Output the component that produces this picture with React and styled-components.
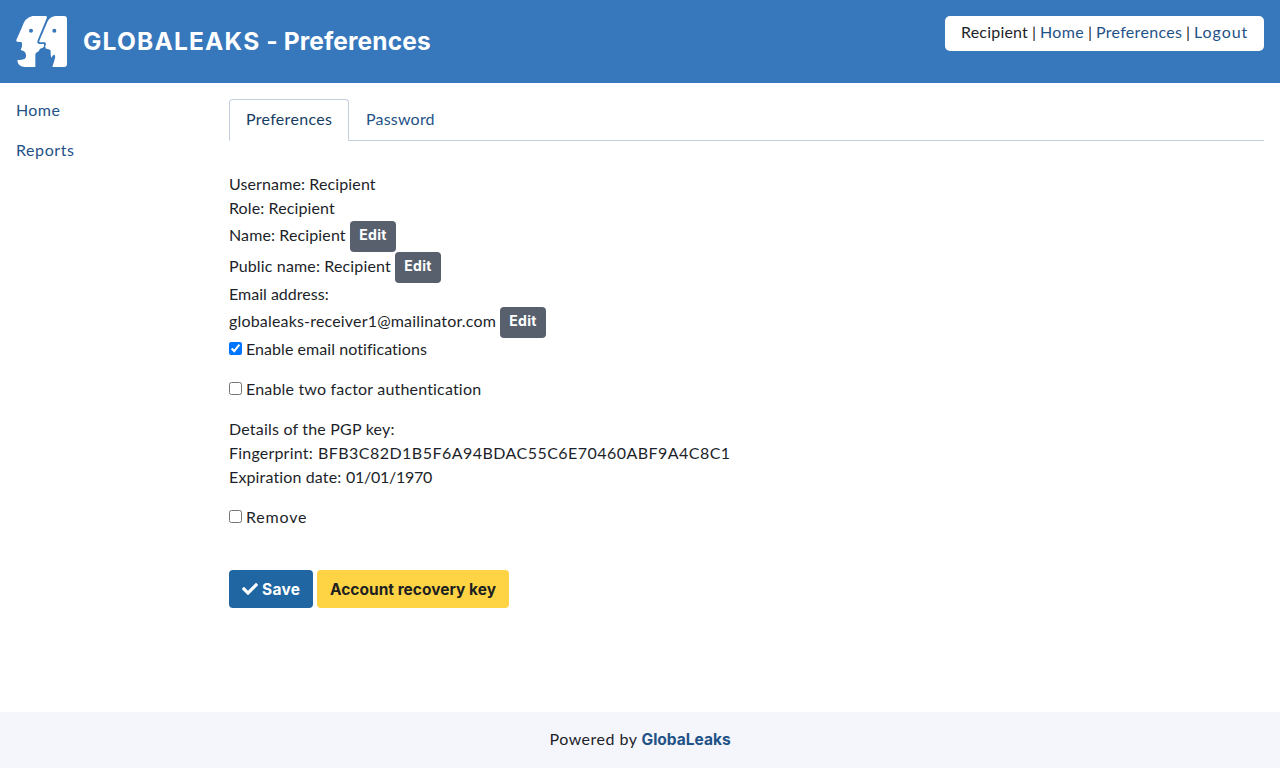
import React from "react";
import styled, { createGlobalStyle } from "styled-components";
import { FaCheck } from "react-icons/fa";

const GlobalStyle = createGlobalStyle`
  *, *::before, *::after { box-sizing: border-box; }
  body {
    margin: 0;
    background: #fff;
    color: #1d1f2a;
    font: 400 16px/24px Lato, "Open Sans", sans-serif;
  }
`;

const Page = styled.div`
  display: flex;
  flex-direction: column;
  min-height: 100vh;
`;

const Header = styled.header`
  display: flex;
  align-items: flex-start;
  height: 83px;
  padding: 16px;
  background: #3777bc;
`;

const Logo = styled.svg`
  width: 51px;
  height: 51px;
  margin-right: 16px;
`;

const Title = styled.h1`
  flex: 1;
  margin: 0;
  color: #fff;
  font: 700 24.5px/50px Inter, sans-serif;
  letter-spacing: 0.12px;
  white-space: nowrap;
`;

const SiteName = styled.span`
  letter-spacing: 1.2px;
`;

const UserBox = styled.nav`
  display: flex;
  align-items: center;
  height: 35px;
  padding: 0 16px 2px;
  border-radius: 5px;
  background: #fff;
`;

const Text = styled.span`
  display: block;
  width: ${(p) => (p.$w ? `${p.$w}px` : "auto")};
  line-height: 22px;
  padding-bottom: 2px;
  letter-spacing: ${(p) => p.$track || 0.01}px;
  white-space: nowrap;
`;

const Link = styled(Text).attrs({ as: "a", href: "#" })`
  color: #1f5287;
  text-decoration: none;
`;

const Divider = styled.span`
  width: 12px;
  line-height: 22px;
  padding-bottom: 2px;
  text-align: center;
`;

const Body = styled.div`
  display: flex;
  flex: 1;
  padding: 16px;
`;

const Sidebar = styled.nav`
  display: flex;
  flex-direction: column;
  gap: 16px;
  width: 213px;
`;

const Main = styled.main`
  flex: 1;
`;

const Tabs = styled.div`
  display: flex;
  height: 42px;
  margin-bottom: 32px;
  border-bottom: 1px solid #c4cfdd;
`;

const Tab = styled.a`
  height: 42px;
  padding: 8px 16px;
  border: 1px solid ${(p) => (p.$active ? "#c4cfdd" : "transparent")};
  border-bottom-color: ${(p) => (p.$active ? "#fff" : "transparent")};
  border-radius: 4px 4px 0 0;
  color: ${(p) => (p.$active ? "#153d63" : "#1f5287")};
`;

const Line = styled.div`
  display: flex;
  align-items: center;
  gap: 4px;
  height: ${(p) => (p.$editable ? 31 : 24)}px;
  margin-bottom: ${(p) => p.$after || 0}px;

  > span {
    margin-bottom: ${(p) => (p.$editable ? 1 : 0)}px;
  }
`;

const Button = styled.button`
  display: inline-flex;
  align-items: center;
  justify-content: center;
  gap: 4px;
  width: ${(p) => p.$w}px;
  height: 38px;
  padding: 0;
  border: 0;
  border-radius: 4px;
  background: ${(p) => (p.$warning ? "#ffd444" : "#2066a2")};
  color: ${(p) => (p.$warning ? "#1d1f21" : "#fff")};
  font: 700 15.5px/24px Inter, sans-serif;
`;

const ButtonText = styled(Text)`
  line-height: 24px;
  padding: 1px 0 0;
`;

const EditButton = styled(Button)`
  height: 31px;
  padding-bottom: 2px;
  background: #58606e;
  font-size: 14px;
`;

const Checkbox = styled.input.attrs({ type: "checkbox" })`
  width: 13px;
  height: 13px;
  margin: 0 0 3px;
`;

const Actions = styled.div`
  display: flex;
  gap: 4px;
`;

const Footer = styled.footer`
  display: flex;
  align-items: center;
  justify-content: center;
  gap: 4px;
  height: 56px;
  background: #f5f6fb;
`;

const Brand = styled(Link)`
  padding-bottom: 0;
  font: 700 15.5px/24px Inter, sans-serif;
`;

const Edit = () => (
  <EditButton $w={46}>
    <Text $track={0.3}>Edit</Text>
  </EditButton>
);

export default function App() {
  return (
    <Page>
      <GlobalStyle />
      <Header>
        <Logo viewBox="0 0 153 153" fill="#fff">
          <path
            fillRule="evenodd"
            d="M50 0H88Q95 0 92 7L65 73Q62 83 69 84H84V90Q83 97 72 98Q70 107 61 110Q58 111 58 116V153H27Q5 153 4 132Q15 133 23 130Q31 127 30 117Q30 111 24 106L14 102L18 91V80Q17 77 3 77Q0 76 1 72L17 36Q27 3 50 0ZM45 38a6 6 0 1 0 0 12a6 6 0 1 0 0-12Z"
          />
          <path
            fillRule="evenodd"
            d="M119 0H144Q153 0 153 9V144Q153 153 144 153H109L117 127Q119 117 114 116Q109 118 107 125Q103 120 104 104Q102 99 90 98L87 91L90 86L88 79H73Q68 79 71 72L95 16Q103 1 119 0ZM115 38a6 6 0 1 0 0 12a6 6 0 1 0 0-12Z"
          />
        </Logo>
        <Title>
          <SiteName>GLOBALEAKS</SiteName> - Preferences
        </Title>
        <UserBox>
          <Text $w={67} $track={0.2}>Recipient</Text>
          <Divider>|</Divider>
          <Link $w={44} $track={0.32}>Home</Link>
          <Divider>|</Divider>
          <Link $w={86} $track={0.3}>Preferences</Link>
          <Divider>|</Divider>
          <Link $w={54} $track={0.95}>Logout</Link>
        </UserBox>
      </Header>
      <Body>
        <Sidebar>
          <Link $track={0.4}>Home</Link>
          <Link $track={0.57}>Reports</Link>
        </Sidebar>
        <Main>
          <Tabs>
            <Tab $active>
              <Text $w={86} $track={0.3}>Preferences</Text>
            </Tab>
            <Tab>
              <Text $w={69} $track={0.2}>Password</Text>
            </Tab>
          </Tabs>
          <Line><Text $track={0.12}>Username: Recipient</Text></Line>
          <Line><Text $track={0.11}>Role: Recipient</Text></Line>
          <Line $editable>
            <Text $w={117} $track={0.12}>Name: Recipient</Text>
            <Edit />
          </Line>
          <Line $editable>
            <Text $w={162} $track={0.15}>Public name: Recipient</Text>
            <Edit />
          </Line>
          <Line><Text>Email address:</Text></Line>
          <Line $editable>
            <Text $w={267} $track={0.18}>globaleaks-receiver1@mailinator.com</Text>
            <Edit />
          </Line>
          <Line $after={16}>
            <Checkbox defaultChecked />
            <Text $track={0.06}>Enable email notifications</Text>
          </Line>
          <Line $after={16}>
            <Checkbox />
            <Text $track={0.18}>Enable two factor authentication</Text>
          </Line>
          <Line><Text $track={0.2}>Details of the PGP key:</Text></Line>
          <Line>
            <Text $w={85} $track={0.2}>Fingerprint:</Text>
            <Text $track={0.46}>BFB3C82D1B5F6A94BDAC55C6E70460ABF9A4C8C1</Text>
          </Line>
          <Line $after={16}>
            <Text $w={113} $track={0.14}>Expiration date:</Text>
            <Text $track={-0.28}>01/01/1970</Text>
          </Line>
          <Line $after={40}>
            <Checkbox />
            <Text $track={0.8}>Remove</Text>
          </Line>
          <Actions>
            <Button $w={84}>
              <FaCheck size={16} />
              <ButtonText $w={38} $track={0.25}>Save</ButtonText>
            </Button>
            <Button $w={192} $warning>
              <ButtonText>Account recovery key</ButtonText>
            </Button>
          </Actions>
        </Main>
      </Body>
      <Footer>
        <Text $w={88} $track={0.5}>Powered by</Text>
        <Brand $w={89}>GlobaLeaks</Brand>
      </Footer>
    </Page>
  );
}
